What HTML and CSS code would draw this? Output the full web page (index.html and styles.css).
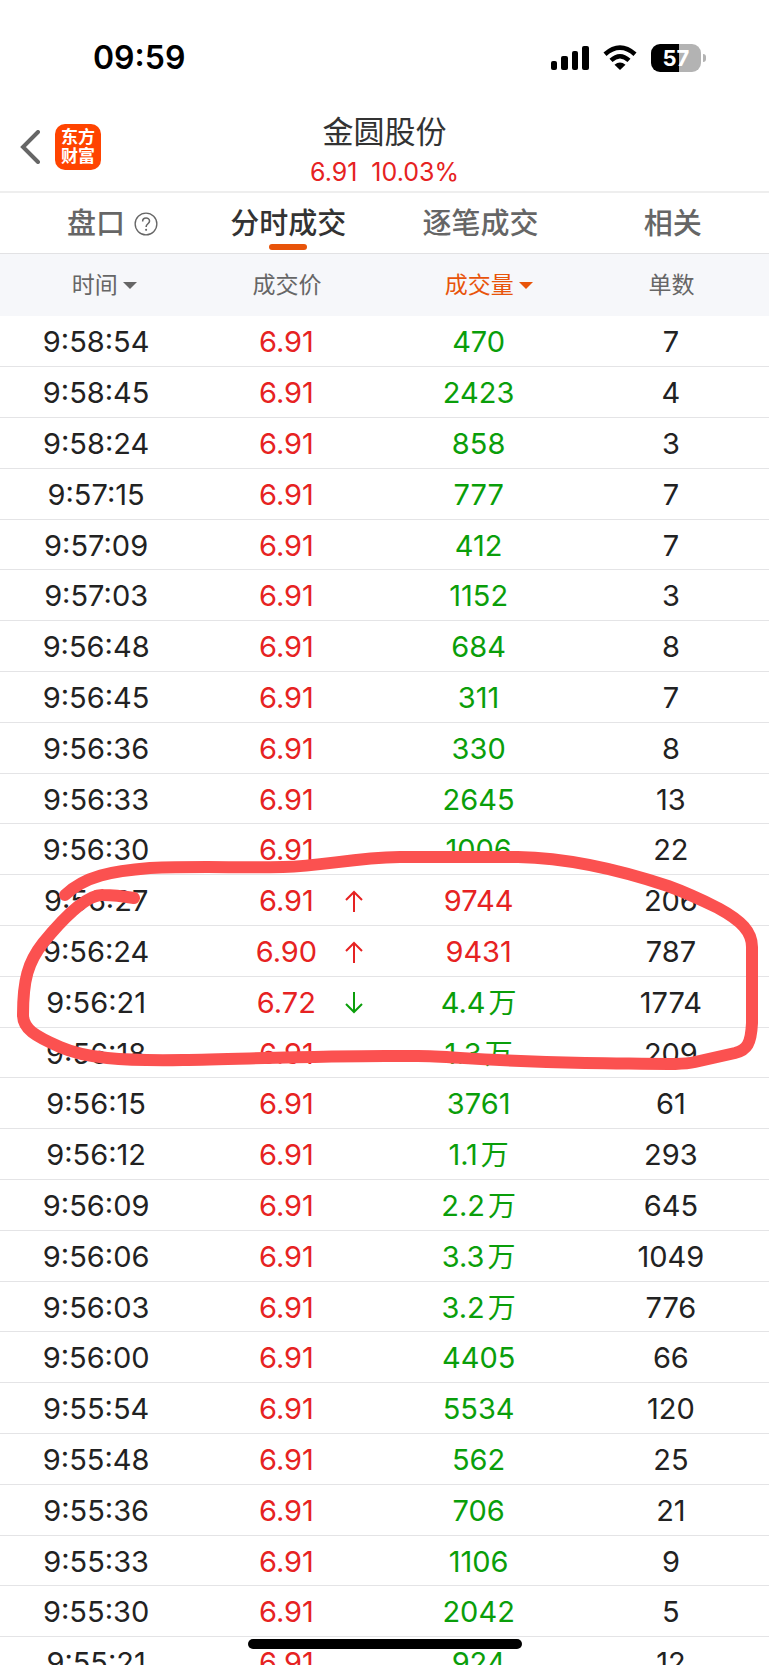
FILE: index.html
```html
<!DOCTYPE html>
<html lang="zh-CN">
<head>
    <meta charset="UTF-8">
    <meta name="viewport" content="width=device-width, initial-scale=1.0">
    <title>金圆股份 分时成交</title>
    <link rel="stylesheet" href="styles.css">
</head>
<body>
    <div class="status-bar">
        <span class="clock">09:59</span>
        <div class="status-icons">
            <svg width="38" height="26" viewBox="0 0 38 26">
                <rect x="0" y="16" width="6" height="9" rx="2"/>
                <rect x="10" y="11" width="7" height="14" rx="2"/>
                <rect x="21" y="6" width="6" height="19" rx="2"/>
                <rect x="31" y="1" width="7" height="24" rx="2"/>
            </svg>
            <svg width="34" height="26" viewBox="0 0 34 26">
                <path d="M2 9.200Q17 -4 32 9.200" fill="none" stroke="#000" stroke-width="4.600"/>
                <path d="M8 15.400Q17 7 26 15.400" fill="none" stroke="#000" stroke-width="4.400"/>
                <path d="M17 25L11.500 19.800Q17 15 22.500 19.800Z"/>
            </svg>
            <div class="battery">57</div>
        </div>
    </div>

    <header class="header">
        <button class="back" type="button" aria-label="返回">
            <svg width="20" height="34" viewBox="0 0 20 34">
                <path d="M18 2L3 17L18 32" fill="none" stroke="#666" stroke-width="4" stroke-linecap="round"/>
            </svg>
        </button>
        <a class="logo" href="#">东方<br>财富</a>
        <div class="stock">
            <h1 class="stock-name">金圆股份</h1>
            <p class="stock-quote"><span>6.91</span><span>10.03%</span></p>
        </div>
    </header>

    <nav class="tabs">
        <a class="tab tab-help" href="#">盘口
            <svg width="24" height="24" viewBox="0 0 25 25" fill="none" stroke="#666">
                <circle cx="12.500" cy="12.500" r="11.300" stroke-width="1.400"/>
                <path d="M9 9.800C9 5 16.200 5.200 16.200 9.500C16.200 12.300 12.600 12.300 12.600 15.600" stroke-width="1.600"/>
                <circle cx="12.600" cy="18.600" r="1.100" fill="#666" stroke="none"/>
            </svg>
        </a>
        <a class="tab active" href="#">分时成交</a>
        <a class="tab" href="#">逐笔成交</a>
        <a class="tab" href="#">相关</a>
    </nav>

    <main class="list">
        <table class="trades">
            <thead>
                <tr>
                    <th><button class="sort" type="button">时间</button></th>
                    <th>成交价</th>
                    <th><button class="sort sorted" type="button">成交量</button></th>
                    <th>单数</th>
                </tr>
            </thead>
            <tbody>
                <tr><td>9:58:54</td><td class="up">6.91</td><td class="down">470</td><td>7</td></tr>
                <tr><td>9:58:45</td><td class="up">6.91</td><td class="down">2423</td><td>4</td></tr>
                <tr><td>9:58:24</td><td class="up">6.91</td><td class="down">858</td><td>3</td></tr>
                <tr><td>9:57:15</td><td class="up">6.91</td><td class="down">777</td><td>7</td></tr>
                <tr><td>9:57:09</td><td class="up">6.91</td><td class="down">412</td><td>7</td></tr>
                <tr><td>9:57:03</td><td class="up">6.91</td><td class="down">1152</td><td>3</td></tr>
                <tr><td>9:56:48</td><td class="up">6.91</td><td class="down">684</td><td>8</td></tr>
                <tr><td>9:56:45</td><td class="up">6.91</td><td class="down">311</td><td>7</td></tr>
                <tr><td>9:56:36</td><td class="up">6.91</td><td class="down">330</td><td>8</td></tr>
                <tr><td>9:56:33</td><td class="up">6.91</td><td class="down">2645</td><td>13</td></tr>
                <tr><td>9:56:30</td><td class="up">6.91</td><td class="down">1006</td><td>22</td></tr>
                <tr>
                    <td>9:56:27</td>
                    <td class="up">6.91<svg class="arrow" viewBox="0 0 18 22"><path d="M9 22V2M1 10L9 2L17 10"/></svg></td>
                    <td class="up">9744</td>
                    <td>206</td>
                </tr>
                <tr>
                    <td>9:56:24</td>
                    <td class="up">6.90<svg class="arrow" viewBox="0 0 18 22"><path d="M9 22V2M1 10L9 2L17 10"/></svg></td>
                    <td class="up">9431</td>
                    <td>787</td>
                </tr>
                <tr>
                    <td>9:56:21</td>
                    <td class="up">6.72<svg class="arrow down" viewBox="0 0 18 22"><path d="M9 0V20M1 12L9 20L17 12"/></svg></td>
                    <td class="down">4.4<span class="unit">万</span></td>
                    <td>1774</td>
                </tr>
                <tr><td>9:56:18</td><td class="up">6.91</td><td class="down">1.3<span class="unit">万</span></td><td>209</td></tr>
                <tr><td>9:56:15</td><td class="up">6.91</td><td class="down">3761</td><td>61</td></tr>
                <tr><td>9:56:12</td><td class="up">6.91</td><td class="down">1.1<span class="unit">万</span></td><td>293</td></tr>
                <tr><td>9:56:09</td><td class="up">6.91</td><td class="down">2.2<span class="unit">万</span></td><td>645</td></tr>
                <tr><td>9:56:06</td><td class="up">6.91</td><td class="down">3.3<span class="unit">万</span></td><td>1049</td></tr>
                <tr><td>9:56:03</td><td class="up">6.91</td><td class="down">3.2<span class="unit">万</span></td><td>776</td></tr>
                <tr><td>9:56:00</td><td class="up">6.91</td><td class="down">4405</td><td>66</td></tr>
                <tr><td>9:55:54</td><td class="up">6.91</td><td class="down">5534</td><td>120</td></tr>
                <tr><td>9:55:48</td><td class="up">6.91</td><td class="down">562</td><td>25</td></tr>
                <tr><td>9:55:36</td><td class="up">6.91</td><td class="down">706</td><td>21</td></tr>
                <tr><td>9:55:33</td><td class="up">6.91</td><td class="down">1106</td><td>9</td></tr>
                <tr><td>9:55:30</td><td class="up">6.91</td><td class="down">2042</td><td>5</td></tr>
                <tr><td>9:55:21</td><td class="up">6.91</td><td class="down">924</td><td>12</td></tr>
            </tbody>
        </table>

        <!-- Hand-drawn mark round the big trades -->
        <svg class="mark" viewBox="0 850 769 224" preserveAspectRatio="none">
            <path d="M65 895C85 876 112 871 150 868C200 866 240 868 283 867C325 866 350 858 400 857H518C570 858 620 870 668 886C690 894 704 901 718 908C742 921 752 932 752 947V1023C751 1044 747 1050 735 1053L695 1062C682 1065 670 1064 585 1063C480 1061 450 1056 418 1056H385C320 1056 240 1059 183 1060C120 1061 85 1058 60 1047C35 1036 23 1029 23 1015C23 980 28 962 43 943C60 922 86 894 103 895C115 895 122 896 134 898"/>
        </svg>
    </main>

    <div class="home-indicator"></div>
</body>
</html>
```

FILE: styles.css
```css
/* General Styles */
* {
    box-sizing: border-box;
}

body {
    display: flex;
    flex-direction: column;
    height: 100vh;
    margin: 0;
    overflow: hidden;
    background: #fff;
    color: #222;
    font-family: Inter, "Noto Sans CJK SC", sans-serif;
}

button {
    padding: 0;
    border: none;
    background: none;
    color: inherit;
    font: inherit;
    cursor: pointer;
}

a {
    color: inherit;
    text-decoration: none;
}

/* Status Bar */
.status-bar {
    display: flex;
    flex-shrink: 0;
    justify-content: space-between;
    align-items: center;
    height: 115px;
    padding: 0 64px 0 93px;
}

.clock {
    color: #000;
    font-size: 32px;
    font-weight: 600;
}

.status-icons {
    display: flex;
    align-items: center;
    gap: 14px;
}

.battery {
    position: relative;
    width: 50px;
    height: 28px;
    margin-right: 4px;
    border-radius: 9px;
    background: linear-gradient(to right, #000 57%, #b3b3b3 57%);
    color: #fff;
    font-size: 22px;
    font-weight: 700;
    line-height: 28px;
    text-align: center;
}

.battery::after {
    content: "";
    position: absolute;
    top: 10px;
    right: -5px;
    width: 3px;
    height: 8px;
    border-radius: 0 3px 3px 0;
    background: #b3b3b3;
}

/* Header */
.header {
    display: grid;
    grid-template-columns: 35px 46px 1fr 101px;
    flex-shrink: 0;
    align-items: center;
    height: 78px;
    padding-left: 20px;
    border-bottom: 2px solid #eee;
}

.back,
.logo {
    margin-bottom: 12px;
}

.back {
    display: flex;
}

.logo {
    height: 46px;
    padding-top: 4px;
    border-radius: 10px;
    background: #ff4400;
    color: #fff;
    font-size: 17px;
    font-weight: 700;
    line-height: 19px;
    text-align: center;
}

.stock {
    align-self: start;
    text-align: center;
}

.stock-name {
    margin: 0;
    color: #333;
    font-size: 31px;
    font-weight: 400;
    line-height: 34px;
}

.stock-quote {
    display: flex;
    justify-content: center;
    gap: 14px;
    margin: 0;
    padding-top: 5px;
    color: #e62222;
    font-size: 25px;
    line-height: 36px;
}

/* Tabs */
.tabs {
    display: grid;
    grid-template-columns: repeat(4, 1fr);
    flex-shrink: 0;
    height: 61px;
    border-bottom: 1px solid #e2e2e4;
}

.tab {
    position: relative;
    color: #666;
    font-size: 29px;
    font-weight: 500;
    line-height: 62px;
    text-align: center;
}

.tab-help {
    display: flex;
    justify-content: center;
    align-items: center;
    gap: 9px;
    padding-left: 33px;
}

.tab.active {
    color: #333;
}

.tab.active::after {
    content: "";
    position: absolute;
    bottom: 5px;
    left: 50%;
    width: 38px;
    height: 6px;
    margin-left: -19px;
    border-radius: 3px;
    background: #e8540a;
}

/* Trades */
.list {
    position: relative;
    flex: 1;
    overflow-y: auto;
    scrollbar-width: none;
}

.trades {
    width: 100%;
    border-collapse: separate;
    border-spacing: 0;
    table-layout: fixed;
}

.trades th {
    height: 62px;
    padding: 0 3px 0 0;
    background: #f6f7fa;
    color: #666;
    font-size: 23px;
    font-weight: 400;
    line-height: 30px;
}

.sort {
    position: relative;
}

.sort::after {
    content: "";
    position: absolute;
    top: 12px;
    right: -19px;
    border: 7px solid transparent;
    border-top-color: currentColor;
    border-bottom: none;
}

.sort.sorted {
    color: #e8540a;
}

.trades td {
    position: relative;
    height: 51px;
    padding: 2px 4px 0 0;
    border-bottom: 1px solid #e4e4e6;
    font-size: 29px;
    line-height: 40px;
    text-align: center;
}

.trades td:first-child {
    padding-right: 0;
}

/* Keeps the average row pitch just under 51px */
.trades tr:nth-child(5n) td {
    height: 50px;
}

.trades .up {
    color: #e62222;
}

.trades .down {
    color: #0a9e0a;
}

.unit {
    margin-left: 3px;
    font-size: 28px;
    line-height: 1;
}

.arrow {
    position: absolute;
    top: 15px;
    right: 22px;
    width: 18px;
    height: 22px;
    fill: none;
    stroke: currentColor;
    stroke-width: 2;
}

.mark {
    position: absolute;
    top: 596px;
    left: 0;
    width: 100%;
    height: 224px;
    fill: none;
    stroke: #fb5150;
    stroke-width: 12;
    stroke-linecap: round;
    pointer-events: none;
}

.home-indicator {
    position: fixed;
    bottom: 16px;
    left: 50%;
    width: 274px;
    height: 10px;
    margin-left: -137px;
    border-radius: 5px;
    background: #000;
}
```
